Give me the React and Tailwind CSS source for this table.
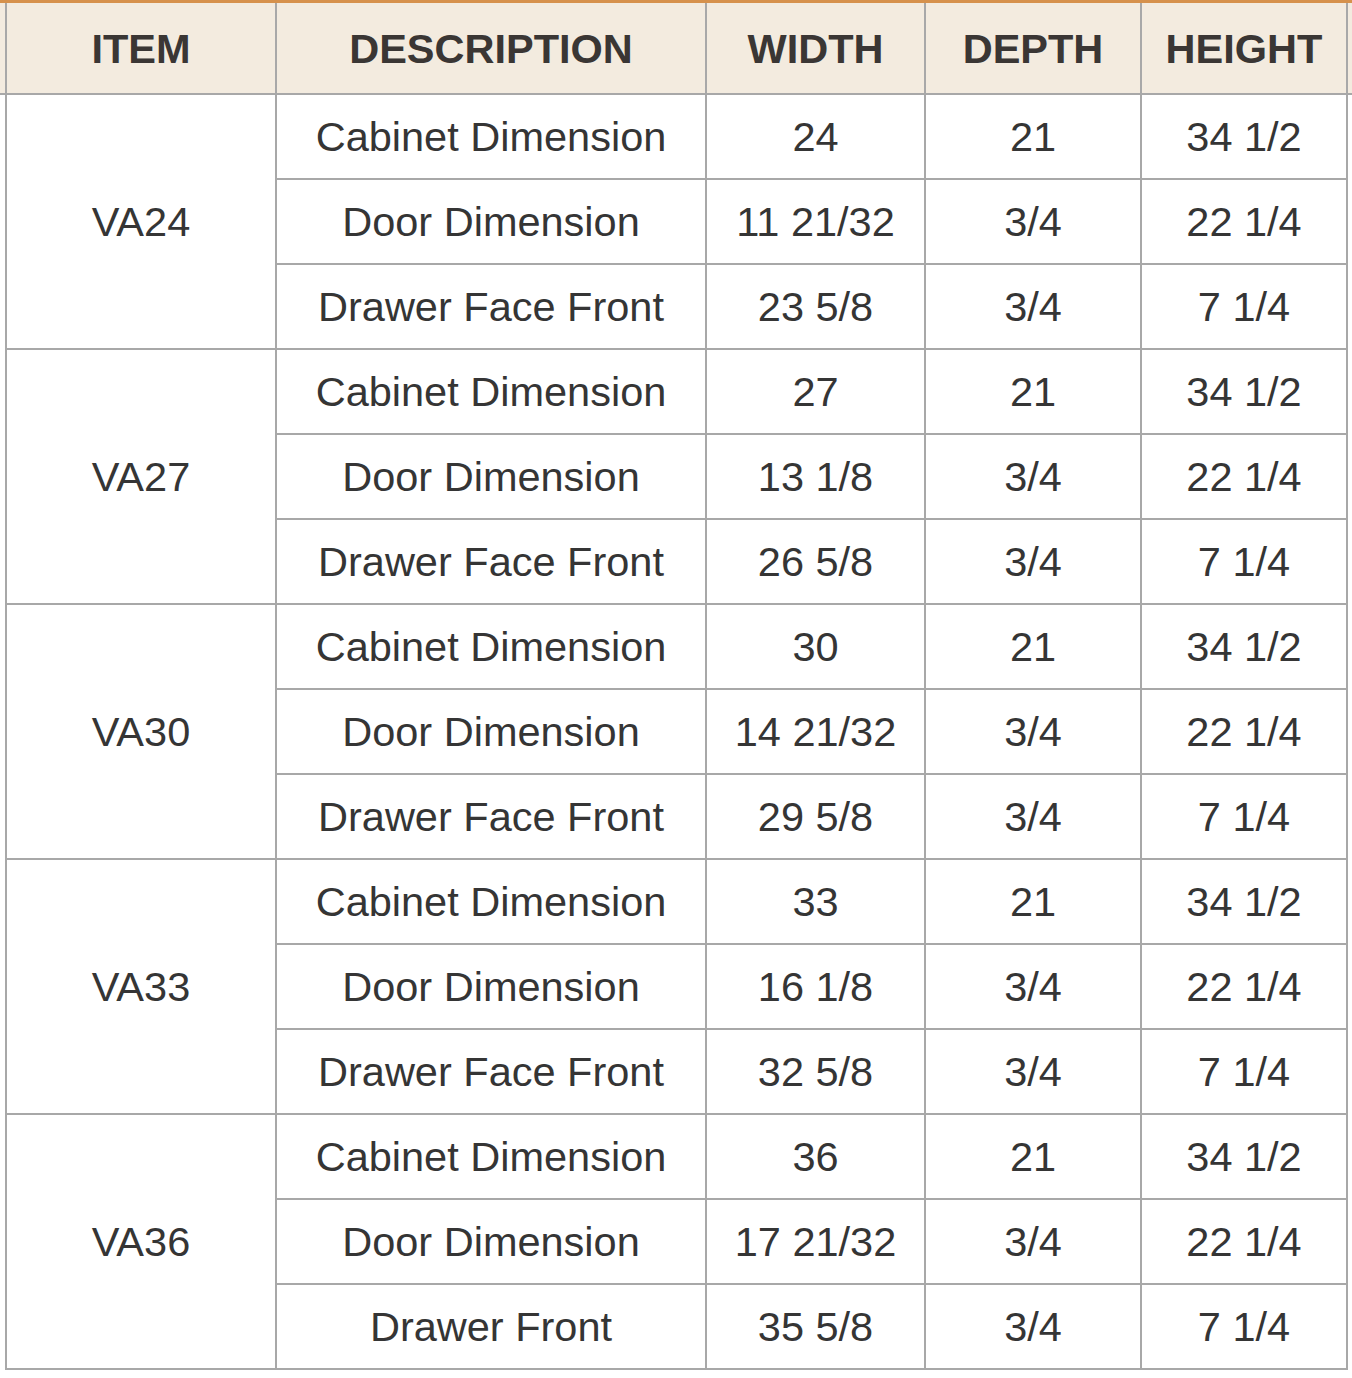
import React from "react";

const items = [
  {
    code: "VA24",
    rows: [
      ["Cabinet Dimension", "24", "21", "34 1/2"],
      ["Door Dimension", "11 21/32", "3/4", "22 1/4"],
      ["Drawer Face Front", "23 5/8", "3/4", "7 1/4"],
    ],
  },
  {
    code: "VA27",
    rows: [
      ["Cabinet Dimension", "27", "21", "34 1/2"],
      ["Door Dimension", "13 1/8", "3/4", "22 1/4"],
      ["Drawer Face Front", "26 5/8", "3/4", "7 1/4"],
    ],
  },
  {
    code: "VA30",
    rows: [
      ["Cabinet Dimension", "30", "21", "34 1/2"],
      ["Door Dimension", "14 21/32", "3/4", "22 1/4"],
      ["Drawer Face Front", "29 5/8", "3/4", "7 1/4"],
    ],
  },
  {
    code: "VA33",
    rows: [
      ["Cabinet Dimension", "33", "21", "34 1/2"],
      ["Door Dimension", "16 1/8", "3/4", "22 1/4"],
      ["Drawer Face Front", "32 5/8", "3/4", "7 1/4"],
    ],
  },
  {
    code: "VA36",
    rows: [
      ["Cabinet Dimension", "36", "21", "34 1/2"],
      ["Door Dimension", "17 21/32", "3/4", "22 1/4"],
      ["Drawer Front", "35 5/8", "3/4", "7 1/4"],
    ],
  },
];

const headers = ["ITEM", "DESCRIPTION", "WIDTH", "DEPTH", "HEIGHT"];

function Cell({ children, className = "" }) {
  return (
    <div className={"flex items-center justify-center bg-white pt-[2px] text-[41.5px] text-[#353535] " + className}>
      {children}
    </div>
  );
}

export default function App() {
  return (
    <div className="w-[1352px] min-h-[1378px] bg-white font-['Liberation_Sans',Arial,sans-serif]">
      <div className="h-[3px] bg-[#d6914c]" />
      <div className="bg-[linear-gradient(to_bottom,#f3ebdf_90px,#a8a8a8_90px,#a8a8a8_92px,white_92px)] pl-[5px]">
        <div className="grid w-[1343px] grid-cols-[268px_428px_217px_214px_204px] gap-[2px] bg-[#a8a8a8] px-[2px] pb-[2px]">
          {headers.map((h) => (
            <div
              key={h}
              className="flex h-[90px] items-center justify-center bg-[#f3ebdf] pt-[2px] text-[41.5px] font-bold text-[#3a3634]"
            >
              {h}
            </div>
          ))}
          {items.map((item) => (
            <React.Fragment key={item.code}>
              <Cell className="row-span-3">{item.code}</Cell>
              {item.rows.map((r, i) => (
                <React.Fragment key={i}>
                  {r.map((v, j) => (
                    <Cell key={j} className="h-[83px]">
                      {v}
                    </Cell>
                  ))}
                </React.Fragment>
              ))}
            </React.Fragment>
          ))}
        </div>
      </div>
    </div>
  );
}
